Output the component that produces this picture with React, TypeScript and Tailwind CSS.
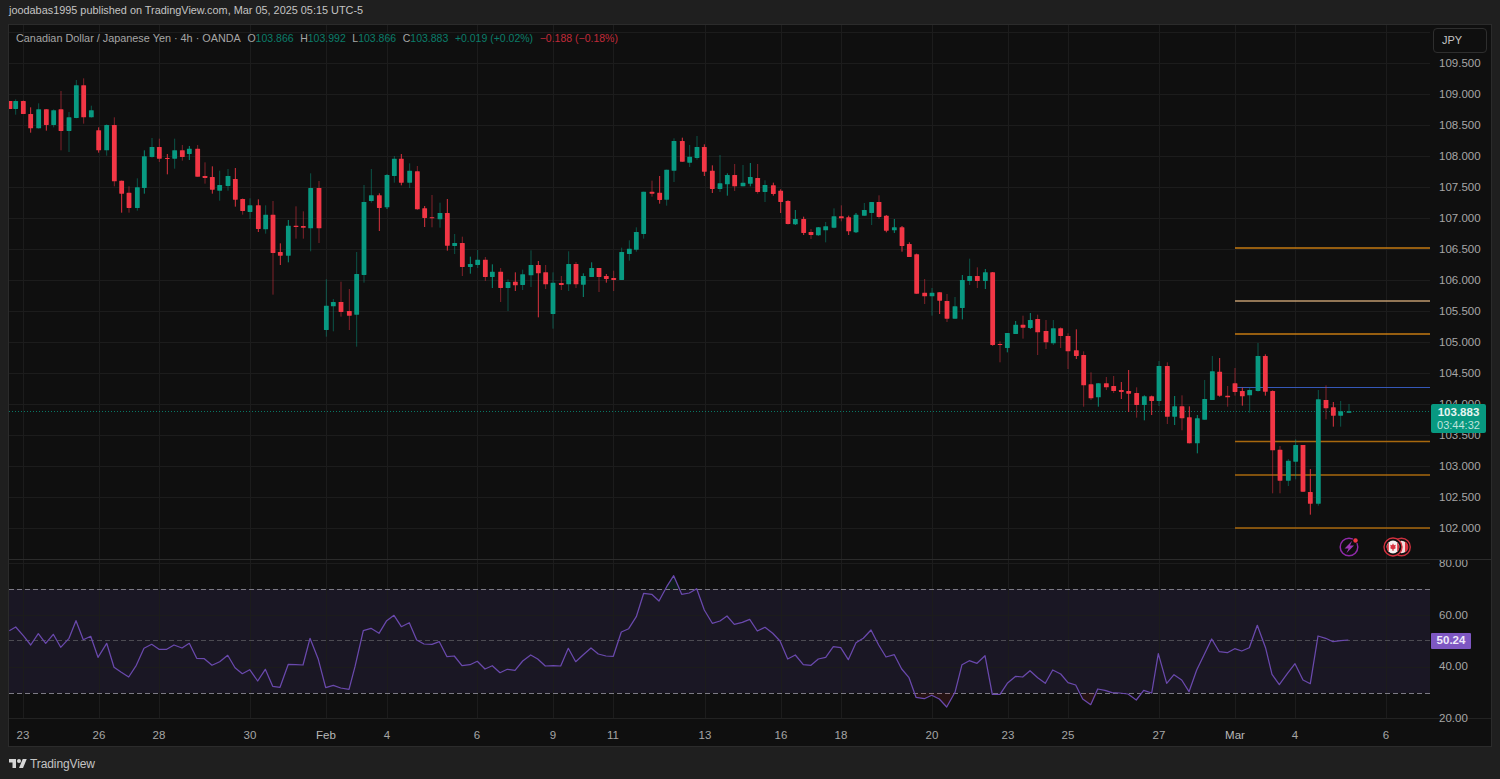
import React from "react";

type C = [number, number, number, number, number, string];
type Seg = { ox: number; oy: number; items: C[] };

const segments: Seg[] = [
  { ox: 0, oy: 70, items: [
    [30,93,93,117,117,"r"],[47,88,93,117,134,"G"],[70,92,93,132,132,"r"],[92,112,132,175,188,"r"],[116,100,118,175,176,"G"],
    [139,118,118,165,182,"r"],[161,118,121,165,172,"G"],[183,63,118,183,241,"R"],[207,126,142,183,246,"G"],[229,30,46,144,145,"G"],
    [251,25,46,142,161,"R"],[274,107,121,142,143,"G"],[296,172,181,241,248,"r"],[320,163,165,241,257,"G"],[343,142,165,334,349,"R"],
    [365,332,332,371,428,"r"],[387,349,368,414,428,"R"],[412,325,352,414,422,"G"],[433,241,259,354,371,"g"],[456,204,231,261,263,"G"],
    [478,206,231,266,276,"R"],[502,252,264,267,313,"r"],[524,206,241,266,296,"G"],[547,225,241,261,272,"R"],[568,228,236,252,270,"g"],
    [593,225,236,320,320,"R"],[615,277,318,324,341,"R"],[637,289,321,359,371,"r"],[659,302,345,362,392,"G"],[684,297,318,348,362,"G"],
    [706,294,327,389,410,"r"],[728,385,387,423,434,"R"],[750,385,406,426,447,"G"],[775,388,406,477,486,"r"],[797,406,434,478,491,"G"],
    [819,393,434,549,674,"R"],[841,520,546,557,585,"r"],[865,450,467,557,577,"g"],[888,409,467,471,506,"R"],[910,424,468,473,506,"R"],
    [932,310,354,475,544,"G"],[957,333,354,475,519,"R"],[979,628,707,780,800,"G"],
  ]},
  { ox: 330, oy: 130, items: [
    [10,507,516,529,604,"G"],[33,455,516,546,560,"R"],[58,477,543,557,600,"R"],[80,366,432,554,650,"G"],[102,165,216,435,458,"G"],
    [124,117,196,213,218,"G"],[148,190,196,234,303,"r"],[171,133,135,232,237,"g"],[193,78,86,138,158,"G"],[214,72,86,158,166,"r"],
    [239,100,122,158,174,"G"],[262,108,124,238,240,"R"],[284,228,235,264,291,"r"],[306,195,262,265,292,"R"],[330,218,249,268,293,"G"],
    [352,207,249,347,362,"r"],[374,312,339,348,372,"G"],[397,320,339,411,438,"R"],[421,380,402,411,431,"g"],[443,360,389,405,414,"G"],
    [466,381,389,441,453,"R"],[487,403,425,441,474,"g"],[512,414,425,474,516,"R"],[534,448,456,474,543,"G"],[556,427,455,466,483,"r"],
    [578,419,433,465,480,"G"],[603,361,405,436,471,"G"],[625,393,405,430,562,"r"],[647,405,427,463,477,"R"],[669,427,458,552,596,"G"],
    [694,438,459,465,480,"R"],[716,364,402,463,483,"G"],[738,396,402,463,474,"R"],[760,430,438,464,501,"g"],[785,397,414,441,441,"g"],
    [807,414,414,441,486,"R"],[829,432,438,447,458,"r"],[851,422,444,450,483,"R"],[875,353,366,450,450,"G"],[898,331,356,372,392,"G"],
    [919,292,306,359,365,"G"],[941,185,185,312,326,"G"],[966,152,185,191,200,"R"],[989,138,188,210,221,"r"],[1010,119,119,209,227,"G"],
  ]},
  { ox: 630, oy: 125, items: [
    [132,40,48,137,171,"G"],[157,38,48,110,110,"r"],[179,60,95,113,126,"G"],[201,33,66,99,104,"G"],[223,58,66,140,153,"r"],
    [247,121,137,192,204,"r"],[270,90,175,192,201,"G"],[292,145,150,178,212,"g"],[314,117,150,184,198,"R"],[339,120,173,184,184,"G"],
    [361,114,156,176,184,"g"],[383,117,159,201,206,"R"],[405,166,180,201,231,"G"],[430,173,181,207,212,"r"],[452,193,197,231,264,"r"],
    [474,226,228,297,298,"r"],[496,255,282,298,300,"g"],[521,275,282,324,330,"r"],[543,312,321,330,342,"R"],[565,306,307,331,332,"g"],
    [587,291,304,316,352,"G"],[612,250,274,308,310,"G"],[634,241,274,280,289,"R"],[656,272,277,319,330,"r"],[678,264,269,322,324,"g"],
    [703,234,255,272,272,"G"],[725,231,231,264,300,"G"],[747,211,231,276,281,"R"],[769,270,272,317,322,"r"],[793,282,307,316,324,"g"],
    [816,303,307,363,380,"r"],[838,352,357,396,396,"r"],[860,386,388,506,506,"r"],[884,462,503,514,537,"R"],[906,489,503,514,572,"G"],
    [929,502,502,527,567,"r"],[951,507,528,581,591,"R"],[975,516,544,581,581,"G"],[997,450,465,549,583,"g"],
  ]},
  { ox: 900, oy: 250, items: [
    [209,26,78,93,105,"G"],[232,52,78,93,114,"R"],[256,57,67,93,117,"g"],[278,66,67,285,287,"r"],[300,274,282,285,337,"R"],
    [322,249,249,294,307,"g"],[347,213,224,252,252,"g"],[369,197,224,233,266,"R"],[391,189,210,234,237,"g"],[413,194,207,247,315,"R"],
    [438,210,243,277,297,"R"],[460,210,235,280,285,"G"],[482,232,235,258,294,"R"],[504,250,258,304,357,"R"],[529,238,301,318,327,"r"],
    [551,304,315,406,470,"R"],[573,367,403,445,450,"R"],[595,400,400,442,470,"g"],[619,381,400,412,420,"R"],[641,378,408,423,429,"R"],
    [664,396,420,426,447,"r"],[686,360,423,431,486,"r"],[710,412,429,465,503,"R"],[733,436,439,465,511,"g"],[755,437,439,453,495,"r"],
    [777,333,348,453,468,"G"],[802,337,348,500,522,"R"],[824,438,469,500,525,"g"],[846,436,469,505,541,"R"],[868,469,502,580,580,"r"],
    [892,495,505,580,610,"g"],[914,390,447,509,509,"G"],[937,318,364,450,450,"G"],[959,324,365,437,440,"r"],[983,408,437,442,470,"R"],[1005,354,400,426,437,"R"],
  ]},
  { ox: 1220, oy: 340, items: [
    [67,143,153,169,197,"r"],[89,143,150,166,218,"G"],[114,9,48,153,155,"G"],[136,43,48,155,167,"r"],[158,150,153,331,460,"R"],
    [180,318,329,422,460,"R"],[205,357,362,422,438,"G"],[227,298,315,365,418,"G"],[249,315,315,455,455,"r"],[271,387,456,491,524,"r"],
    [295,150,178,491,497,"G"],[318,136,180,205,238,"R"],[340,186,202,227,260,"r"],[362,183,214,227,260,"G"],[387,192,214,218,218,"G"],
  ]},
];

const rsiParts: { ox: number; pts: number[] }[] = [
  { ox: 0, pts: [28,182,47,171,70,197,92,225,115,191,137,220,160,193,182,232,207,205,228,152,250,209,272,199,294,262,320,220,342,292,364,307,386,321,409,286,432,235,455,223,477,238,500,238,522,225,546,234,568,220,590,265,613,266,636,286,659,275,683,256,705,293,727,311,749,299,773,333,796,298,818,349,840,352,865,283,887,284,909,285,930,205,955,268,977,353,1000,346,1022,354,1047,358,1065,290,1090,182,1113,175,1137,190,1160,152,1182,136,1204,170,1228,158,1250,210,1272,222,1296,223,1318,215,1341,260,1363,258,1386,287,1410,284,1432,274,1455,297,1477,287,1500,308] },
  { ox: 500, pts: [22,298,45,301,68,273,92,255,113,267,136,288,160,287,182,288,205,235,227,275,250,254,273,234,295,252,318,258,340,259,364,186,386,176,409,140,431,70,455,73,477,93,500,50,521,17,545,73,568,69,590,56,613,120,637,160,660,153,681,138,703,163,727,157,749,148,772,183,795,172,818,190,840,213,863,267,886,255,910,284,933,286,955,267,977,262,1000,230,1022,233,1045,269,1068,218,1090,205,1113,180,1136,225,1158,261,1183,254,1205,297,1227,323,1248,382,1273,386,1295,376,1318,387,1340,411,1365,367,1386,284,1408,272,1431,280,1455,257,1477,373,1500,373] },
  { ox: 1000, pts: [22,340,47,319,68,321,90,302,113,323,136,340,158,300,182,312,204,338,227,345,248,387,272,404,293,357,315,361,336,368,358,369,384,372,409,390,431,361,455,369,475,251,500,340,522,314,545,330,567,365,590,300,612,255,635,207,658,245,682,248,704,236,725,243,748,233,772,166,797,235,816,313,838,344,862,311,885,281,909,330,931,341,954,198,977,205,999,215,1022,212,1045,210] },
];

const rsiPoints = rsiParts
  .flatMap((p) => {
    const out: string[] = [];
    for (let i = 0; i < p.pts.length; i += 2) out.push(`${(p.ox + p.pts[i] / 3).toFixed(1)},${(570 + p.pts[i + 1] / 3).toFixed(1)}`);
    return out;
  })
  .join(" ");

const timeLabels: { x: number; t: string; strong?: boolean }[] = [
  { x: 23, t: "23" }, { x: 99, t: "26" }, { x: 159, t: "28" }, { x: 250, t: "30" }, { x: 326, t: "Feb", strong: true },
  { x: 387, t: "4" }, { x: 477, t: "6" }, { x: 553, t: "9" }, { x: 613, t: "11" }, { x: 705, t: "13" },
  { x: 781, t: "16" }, { x: 841, t: "18" }, { x: 932, t: "20" }, { x: 1008, t: "23" }, { x: 1068, t: "25" },
  { x: 1159, t: "27" }, { x: 1235, t: "Mar", strong: true }, { x: 1295, t: "4" }, { x: 1386, t: "6" },
];

const priceLabels = ["109.500","109.000","108.500","108.000","107.500","107.000","106.500","106.000","105.500","105.000","104.500","104.000","103.500","103.000","102.500","102.000"];
const levels: [number, string][] = [[248, "#c47a12"], [301, "#bf9a6e"], [334, "#c47a12"], [441.5, "#a8680e"], [475, "#a8680e"], [528, "#a8680e"]];
const FONT = "font-['Liberation_Sans',Arial,sans-serif]";

function Candle({ c, ox, oy }: { c: C; ox: number; oy: number }) {
  const [zx, wt, bt, bb, wb, k] = c;
  const x = ox + zx / 3;
  const up = k === "g" || k === "G";
  const dim = k === "G" || k === "R";
  const col = up ? "#089981" : "#f23645";
  return (
    <g>
      <line x1={x} x2={x} y1={oy + wt / 3} y2={oy + wb / 3} stroke={col} strokeWidth={1} strokeOpacity={dim ? 0.5 : 0.9} />
      <rect x={x - 2.4} y={oy + bt / 3} width={4.8} height={Math.max(1, (bb - bt) / 3)} fill={col} rx={0.4} />
    </g>
  );
}

function Grid({ hs, y1, y2 }: { hs: number[]; y1: number; y2: number }) {
  return (
    <g stroke="#1c1c1c" strokeWidth={1}>
      {hs.map((y) => <line key={y} x1={9} x2={1430} y1={y} y2={y} />)}
      {timeLabels.map((l) => <line key={l.x} x1={l.x + 0.5} x2={l.x + 0.5} y1={y1} y2={y2} />)}
    </g>
  );
}

function MainChart() {
  const hs = Array.from({ length: 17 }, (_, i) => 32.5 + i * 31);
  return (
    <svg viewBox="9 25 1421 534" className="block w-[1421px] h-[534px] shrink-0">
      <Grid hs={hs} y1={25} y2={559} />
      <line x1={9} x2={1430} y1={411.5} y2={411.5} stroke="#089981" strokeOpacity={0.75} strokeDasharray="1 2" />
      {levels.map(([y, col]) => <line key={y} x1={1235} x2={1430} y1={y} y2={y} stroke={col} strokeWidth={1.3} />)}
      <line x1={1237} x2={1430} y1={387.5} y2={387.5} stroke="#3558b8" strokeWidth={1} />
      {segments.map((s, i) => s.items.map((c, j) => <Candle key={`${i}-${j}`} c={c} ox={s.ox} oy={s.oy} />))}
      {/* lightning event */}
      <circle cx={1349} cy={547} r={8.8} fill="#0f0f0f" stroke="#8f2aa8" strokeWidth={1.5} />
      <path d="M1352.2 540.8 L1344.6 548.4 H1348.6 L1346.4 553.2 L1354 545.6 H1350 Z" fill="#9c36b5" />
      <circle cx={1355.5} cy={540.5} r={3} fill="#0f0f0f" />
      <circle cx={1355.5} cy={540.5} r={2.2} fill="#f23645" />
      {/* canada events */}
      <circle cx={1401.5} cy={547} r={8.8} fill="#0f0f0f" stroke="#c9303e" strokeWidth={1.4} />
      <circle cx={1401.5} cy={547} r={6.2} fill="#f2dada" />
      <path d="M1405 541.5 A6.2 6.2 0 0 1 1405 552.5 Z" fill="#d8323f" />
      <circle cx={1393} cy={547} r={9} fill="#0f0f0f" stroke="#d4303e" strokeWidth={1.4} />
      <circle cx={1393} cy={547} r={6.4} fill="#f5f0f0" />
      <path d="M1388.8 542.2 A6.4 6.4 0 0 0 1388.8 551.8 Z" fill="#d8323f" />
      <path d="M1397.2 542.2 A6.4 6.4 0 0 1 1397.2 551.8 Z" fill="#d8323f" />
      <path d="M1393 543.2 L1394 545.2 L1395.8 544.8 L1395.2 547.2 L1396 548 L1393.5 549.6 V551 H1392.5 V549.6 L1390 548 L1390.8 547.2 L1390.2 544.8 L1392 545.2 Z" fill="#d8323f" />
    </svg>
  );
}

function RsiChart() {
  const hs = [563.5, 615.5, 667.5];
  return (
    <svg viewBox="9 560 1421 158" className="block w-[1421px] h-[158px] shrink-0">
      <rect x={9} y={589} width={1421} height={104} fill="#1a1724" />
      <Grid hs={hs} y1={560} y2={718} />
      <line x1={9} x2={1430} y1={589.5} y2={589.5} stroke="#7c7a84" strokeDasharray="5 3" />
      <line x1={9} x2={1430} y1={640.5} y2={640.5} stroke="#4c4b52" strokeDasharray="5 3" />
      <line x1={9} x2={1430} y1={693.5} y2={693.5} stroke="#7c7a84" strokeDasharray="5 3" />
      <polygon points="916,693 916,697.5 924,698.7 932,695.3 939,699 947,707 955,693" fill="#f23645" fillOpacity={0.1} />
      <polygon points="1083,693 1082,699 1091,704.7 1098,693" fill="#f23645" fillOpacity={0.1} />
      <polygon points="665,589 673.7,575.7 681,589" fill="#089981" fillOpacity={0.1} />
      <polyline points={rsiPoints} fill="none" stroke="#6a49ad" strokeWidth={1.25} strokeLinejoin="round" />
    </svg>
  );
}

function Logo() {
  return (
    <svg viewBox="0 0 36 28" className="w-[18px] h-[14px] shrink-0" fill="#d6d6d6">
      <path d="M14 22H7V11H0V4h14v18z" />
      <path d="M28 22h-8l7.5-18h8L28 22z" />
      <circle cx="20" cy="8" r="4" />
    </svg>
  );
}

export default function App() {
  return (
    <div className={`w-[1500px] h-[779px] bg-[#1f1f1f] flex flex-col overflow-hidden ${FONT}`}>
      <div className="h-[24px] pl-[9px] pb-[3px] flex items-center text-[10.88px] text-[#c4c4c4] whitespace-nowrap">
        joodabas1995 published on TradingView.com, Mar 05, 2025 05:15 UTC-5
      </div>
      <div className="ml-[8px] mr-[8px] h-[723px] border border-[#2b2b2b] bg-[#0f0f0f] flex flex-col">
        {/* price pane */}
        <div className="relative z-10 h-[535px] border-b border-[#2b2b2b] bg-[#0f0f0f] flex">
          <MainChart />
          <div className="relative flex-1 pt-[23px] text-[11.5px] text-[#a6a6a6]">
            {priceLabels.map((p) => (
              <div key={p} className="h-[31px] flex items-center pl-[9px]">{p}</div>
            ))}
            <div className="absolute left-[3px] top-[3px] w-[54px] h-[25px] rounded-[4px] border border-[#2e2e2e] bg-[#0f0f0f] flex items-center pl-[8px] text-[11px] text-[#c4c4c4]">JPY</div>
            <div className="absolute left-[1px] top-[379px] w-[55px] h-[29px] rounded-[2px] bg-[#089981] flex flex-col items-center justify-center">
              <span className="text-[11.5px] leading-[13px] font-bold text-[#e6f5f2]">103.883</span>
              <span className="text-[11px] leading-[13px] text-[#bfe3dc]">03:44:32</span>
            </div>
          </div>
          {/* legend */}
          <div className="absolute left-[7px] top-[7px] flex items-center gap-[6.6px] text-[10.5px] leading-[13px] whitespace-nowrap">
            <span className="text-[10.85px] text-[#a6a6a6]">Canadian Dollar / Japanese Yen · 4h · OANDA</span>
            <span className="text-[#a6a6a6]">O<span className="text-[#0b7d6a]">103.866</span></span>
            <span className="text-[#a6a6a6]">H<span className="text-[#0b7d6a]">103.992</span></span>
            <span className="text-[#a6a6a6]">L<span className="text-[#0b7d6a]">103.866</span></span>
            <span className="text-[#a6a6a6]">C<span className="text-[#0b7d6a]">103.883</span></span>
            <span className="text-[#0b7d6a]">+0.019 (+0.02%)</span>
            <span className="text-[#c12a39]">−0.188 (−0.18%)</span>
          </div>
        </div>
        {/* rsi pane */}
        <div className="h-[159px] border-b border-[#222222] flex">
          <RsiChart />
          <div className="relative flex-1 -mt-[4px] text-[11.5px] text-[#a6a6a6]">
            {["80.00", "60.00", "40.00", "20.00"].map((v) => (
              <div key={v} className="h-[14px] mb-[37.6px] flex items-center pl-[9px] leading-[14px]">{v}</div>
            ))}
            <div className="absolute left-[1px] top-[77px] w-[40px] h-[16px] rounded-[1px] bg-[#7e57c2] flex items-center justify-center text-[11.5px] font-bold text-[#efe9fa]">50.24</div>
          </div>
        </div>
        {/* time axis */}
        <div className="flex-1 flex pt-[9px] text-[11.5px] leading-[14px] text-[#a6a6a6]">
          <div className="w-[14px] shrink-0" />
          {timeLabels.map((l, i) => (
            <div key={l.x + l.t} className="shrink-0" style={{ width: (timeLabels[i + 1]?.x ?? l.x + 60) - l.x }}>
              <div className={`w-0 flex justify-center whitespace-nowrap ${l.strong ? "text-[#b8b8b8]" : ""}`}>{l.t}</div>
            </div>
          ))}
        </div>
      </div>
      <div className="flex-1 pl-[9px] pt-[2px] flex items-center gap-[3px]">
        <Logo />
        <span className="text-[12px] text-[#c4c4c4] tracking-[-0.1px]">TradingView</span>
      </div>
    </div>
  );
}
